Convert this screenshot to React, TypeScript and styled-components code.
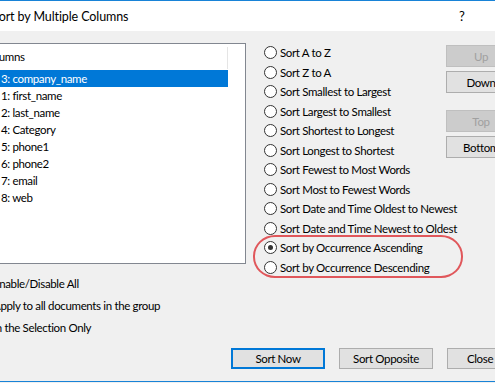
import styled, { createGlobalStyle } from "styled-components";

const GlobalStyle = createGlobalStyle`
  html, body {
    margin: 0;
    padding: 0;
    overflow: hidden;
    background: #f0f0f0;
  }
  body {
    font-family: Lato, "Liberation Sans", sans-serif;
    font-size: 11.5px;
    letter-spacing: -0.35px;
    color: #000;
  }
`;

const columns = [
  { label: "3: company_name", selected: true },
  { label: "1: first_name" },
  { label: "2: last_name" },
  { label: "4: Category" },
  { label: "5: phone1" },
  { label: "6: phone2" },
  { label: "7: email" },
  { label: "8: web" },
];

const sortModes = [
  "Sort A to Z",
  "Sort Z to A",
  "Sort Smallest to Largest",
  "Sort Largest to Smallest",
  "Sort Shortest to Longest",
  "Sort Longest to Shortest",
  "Sort Fewest to Most Words",
  "Sort Most to Fewest Words",
  "Sort Date and Time Oldest to Newest",
  "Sort Date and Time Newest to Oldest",
  "Sort by Occurrence Ascending",
  "Sort by Occurrence Descending",
];

const options = [
  "Enable/Disable All",
  "Apply to all documents in the group",
  "In the Selection Only",
];

export default function App() {
  return (
    <>
      <GlobalStyle />
      <Dialog>
        <TitleBar>
          <Title>Sort by Multiple Columns</Title>
          <TitleButton>?</TitleButton>
          <TitleButton>✕</TitleButton>
        </TitleBar>
        <Body>
          <Top>
            <ListCol>
              <ListBox>
                <ListHeader>
                  <HeaderCell>Columns</HeaderCell>
                  <ColumnDivider />
                </ListHeader>
                <RowList>
                  {columns.map((c) => (
                    <Row key={c.label} $selected={!!c.selected}>
                      <CheckBox />
                      {c.label}
                    </Row>
                  ))}
                </RowList>
              </ListBox>
              <Options>
                {options.map((o) => (
                  <OptionRow key={o}>
                    <CheckBox />
                    {o}
                  </OptionRow>
                ))}
              </Options>
            </ListCol>

            <RadioGroup>
              {sortModes.map((m) => (
                <RadioRow key={m}>
                  <RadioDot $checked={m === "Sort by Occurrence Ascending"} />
                  {m}
                </RadioRow>
              ))}
              <Highlight />
            </RadioGroup>

            <SideButtons>
              <ButtonGroup>
                <SideButton disabled>Up</SideButton>
                <SideButton>Down</SideButton>
              </ButtonGroup>
              <ButtonGroup>
                <SideButton disabled>Top</SideButton>
                <SideButton>Bottom</SideButton>
              </ButtonGroup>
            </SideButtons>
          </Top>

          <Footer>
            <FooterButton $default>Sort Now</FooterButton>
            <FooterButton>Sort Opposite</FooterButton>
            <FooterButton $width={66}>Close</FooterButton>
          </Footer>
        </Body>
      </Dialog>
    </>
  );
}

const Dialog = styled.div`
  margin-left: -40px;
  width: 600px;
  height: 380px;
  border-top: 1px solid #1883d7;
  border-bottom: 1px solid #1883d7;
  background: #f0f0f0;
  display: flex;
  flex-direction: column;
`;

const TitleBar = styled.div`
  height: 30px;
  flex: none;
  background: #fff;
  display: flex;
  align-items: center;
  padding: 0 29px 0 32px;
`;

const Title = styled.div`
  flex: 1;
  font-size: 12.5px;
  letter-spacing: -0.1px;
`;

const TitleButton = styled.div`
  width: 46px;
  text-align: center;
  font-size: 13px;
  letter-spacing: 0;
`;

const Body = styled.div`
  flex: 1;
  padding: 12px 0 0 14px;
`;

const Top = styled.div`
  display: flex;
  gap: 18px;
  align-items: flex-start;
`;

const ListCol = styled.div`
  width: 272px;
  display: flex;
  flex-direction: column;
`;

const ListBox = styled.div`
  height: 221px;
  box-sizing: border-box;
  border: 1px solid #828790;
  background: #fff;
  overflow: hidden;
`;

const ListHeader = styled.div`
  height: 25px;
  display: flex;
  align-items: center;
`;

const HeaderCell = styled.div`
  width: 252px;
  padding-left: 8px;
  box-sizing: border-box;
`;

const ColumnDivider = styled.div`
  width: 1px;
  height: 22px;
  margin-top: 3px;
  background: #e5e5e5;
`;

const RowList = styled.div`
  padding-top: 1px;
`;

const Row = styled.div<{ $selected: boolean }>`
  width: 253px;
  height: 17px;
  box-sizing: border-box;
  padding-left: 6px;
  display: flex;
  align-items: center;
  gap: 7px;
  white-space: nowrap;
  background: ${(p) => (p.$selected ? "#0078d7" : "transparent")};
  color: ${(p) => (p.$selected ? "#fff" : "#000")};
`;

const CheckBox = styled.span`
  flex: none;
  width: 13px;
  height: 13px;
  box-sizing: border-box;
  border: 1px solid #333;
  background: #fff;
`;

const Options = styled.div`
  margin-top: 8px;
  display: flex;
  flex-direction: column;
`;

const OptionRow = styled.div`
  height: 22px;
  display: flex;
  align-items: center;
  gap: 5px;
  padding-left: 1px;
  white-space: nowrap;
`;

const RadioGroup = styled.div`
  position: relative;
  width: 164px;
  display: flex;
  flex-direction: column;
`;

const RadioRow = styled.div`
  height: 19.5px;
  display: flex;
  align-items: center;
  gap: 3px;
  white-space: nowrap;
`;

const RadioDot = styled.span<{ $checked: boolean }>`
  flex: none;
  width: 13px;
  height: 13px;
  box-sizing: border-box;
  border: 1px solid #333;
  border-radius: 50%;
  background: #fff;
  display: grid;
  place-items: center;

  &::after {
    content: "";
    width: 5px;
    height: 5px;
    border-radius: 50%;
    background: ${(p) => (p.$checked ? "#333" : "transparent")};
  }
`;

const Highlight = styled.div`
  position: absolute;
  left: -11px;
  top: 192px;
  width: 210px;
  height: 43px;
  box-sizing: border-box;
  border: 2px solid #e0575b;
  border-radius: 22px / 21px;
  pointer-events: none;
`;

const SideButtons = styled.div`
  margin-top: 2px;
  display: flex;
  flex-direction: column;
  gap: 17px;
`;

const ButtonGroup = styled.div`
  display: flex;
  flex-direction: column;
  gap: 4px;
`;

const Button = styled.button`
  box-sizing: border-box;
  padding: 0;
  font: inherit;
  letter-spacing: inherit;
  color: #000;
  background: #e1e1e1;
  border: 1px solid #adadad;

  &:disabled {
    background: #cccccc;
    border-color: #bfbfbf;
    color: #a0a0a0;
  }
`;

const SideButton = styled(Button)`
  width: 70px;
  height: 22px;
`;

const Footer = styled.div`
  margin-top: 10px;
  padding-left: 257px;
  display: flex;
  gap: 14px;
`;

const FooterButton = styled(Button)<{ $default?: boolean; $width?: number }>`
  width: ${(p) => p.$width ?? 94}px;
  height: 21px;
  border: ${(p) => (p.$default ? "2px solid #0078d7" : "1px solid #adadad")};
`;
